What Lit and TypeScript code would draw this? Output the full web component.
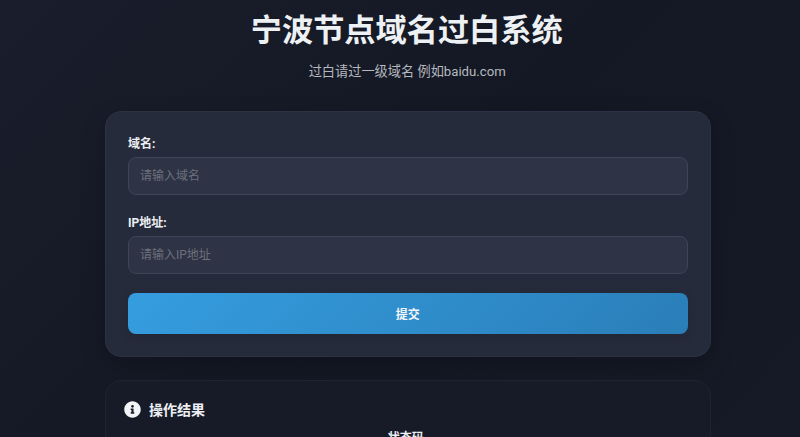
import { LitElement, html, css } from "lit";
import { customElement } from "lit/decorators.js";

@customElement("app-root")
export class AppRoot extends LitElement {
  static styles = css`
    :host {
      display: block;
      height: 437px;
      overflow: hidden;
      background: linear-gradient(135deg, #1a1e2c 0%, #141824 50%, #161a26 100%);
      font-family: "Roboto", "Noto Sans CJK SC", sans-serif;
      color: #eceff3;
    }
    .page {
      width: 606.5px;
      margin-left: 104.5px;
      padding-top: 11px;
      box-sizing: border-box;
    }
    h1 {
      margin: 0;
      text-align: center;
      font-size: 31.2px;
      line-height: 40px;
      font-weight: 700;
      color: #eef1f4;
      padding-right: 2px;
    }
    .sub {
      margin: 11px 0 0;
      text-align: center;
      font-size: 13.2px;
      line-height: 20px;
      color: #b4b8bf;
      padding-right: 1px;
    }
    .card {
      margin-top: 29px;
      height: 246px;
      box-sizing: border-box;
      padding: 23px 22.25px 0 22.5px;
      background: #262b3b;
      border: 1px solid #2d3242;
      border-radius: 16px;
      box-shadow: 0 8px 24px rgba(0, 0, 0, 0.22);
    }
    .field {
      display: flex;
      flex-direction: column;
    }
    .field + .field {
      margin-top: 19px;
    }
    label {
      font-size: 12px;
      line-height: 18px;
      font-weight: 700;
      color: #eceff3;
      margin-bottom: 4px;
    }
    input {
      height: 38px;
      box-sizing: border-box;
      padding: 0 11px 1px;
      background: #2e3346;
      border: 1px solid #3f4456;
      border-radius: 8px;
      font: inherit;
      font-size: 12px;
      color: #eceff3;
      outline: none;
    }
    input::placeholder {
      color: #6d707b;
      opacity: 1;
    }
    button {
      display: block;
      width: 100%;
      height: 41px;
      margin-top: 19px;
      border: 0;
      border-radius: 8px;
      background: linear-gradient(135deg, #359ddf 0%, #2a7eb8 100%);
      box-shadow: 0 3px 10px rgba(0, 0, 0, 0.12);
      font: inherit;
      font-size: 12px;
      font-weight: 700;
      color: #f2f6f9;
    }
    .result {
      margin-top: 23px;
      height: 120px;
      box-sizing: border-box;
      padding: 19px 18.5px;
      background: #171b27;
      border: 1px solid #1f2330;
      border-radius: 16px;
    }
    .result-head {
      display: flex;
      align-items: center;
      gap: 8px;
      height: 18px;
      font-size: 14px;
      font-weight: 700;
      color: #eceff3;
    }
    .result-head svg {
      width: 17px;
      height: 17px;
      flex: none;
    }
    .col {
      margin-top: 12px;
      padding-right: 4px;
      text-align: center;
      font-size: 12px;
      line-height: 16px;
      font-weight: 700;
      color: #eceff3;
    }
  `;

  render() {
    return html`
      <div class="page">
        <h1>宁波节点域名过白系统</h1>
        <p class="sub">过白请过一级域名 例如baidu.com</p>
        <form class="card" @submit=${(e: Event) => e.preventDefault()}>
          <div class="field">
            <label>域名:</label>
            <input placeholder="请输入域名" />
          </div>
          <div class="field">
            <label>IP地址:</label>
            <input placeholder="请输入IP地址" />
          </div>
          <button type="submit">提交</button>
        </form>
        <section class="result">
          <div class="result-head">
            <svg viewBox="0 0 512 512" aria-hidden="true">
              <path
                fill="#f2f4f6"
                d="M256 8C119 8 8 119 8 256s111 248 248 248 248-111 248-248S393 8 256 8zm0 110a42 42 0 1 1 0 84 42 42 0 0 1 0-84zm56 254c0 7-5 12-12 12h-88c-7 0-12-5-12-12v-24c0-7 5-12 12-12h12v-64h-12c-7 0-12-5-12-12v-24c0-7 5-12 12-12h64c7 0 12 5 12 12v100h12c7 0 12 5 12 12z"
              />
            </svg>
            <span>操作结果</span>
          </div>
          <div class="col">状态码</div>
        </section>
      </div>
    `;
  }
}
